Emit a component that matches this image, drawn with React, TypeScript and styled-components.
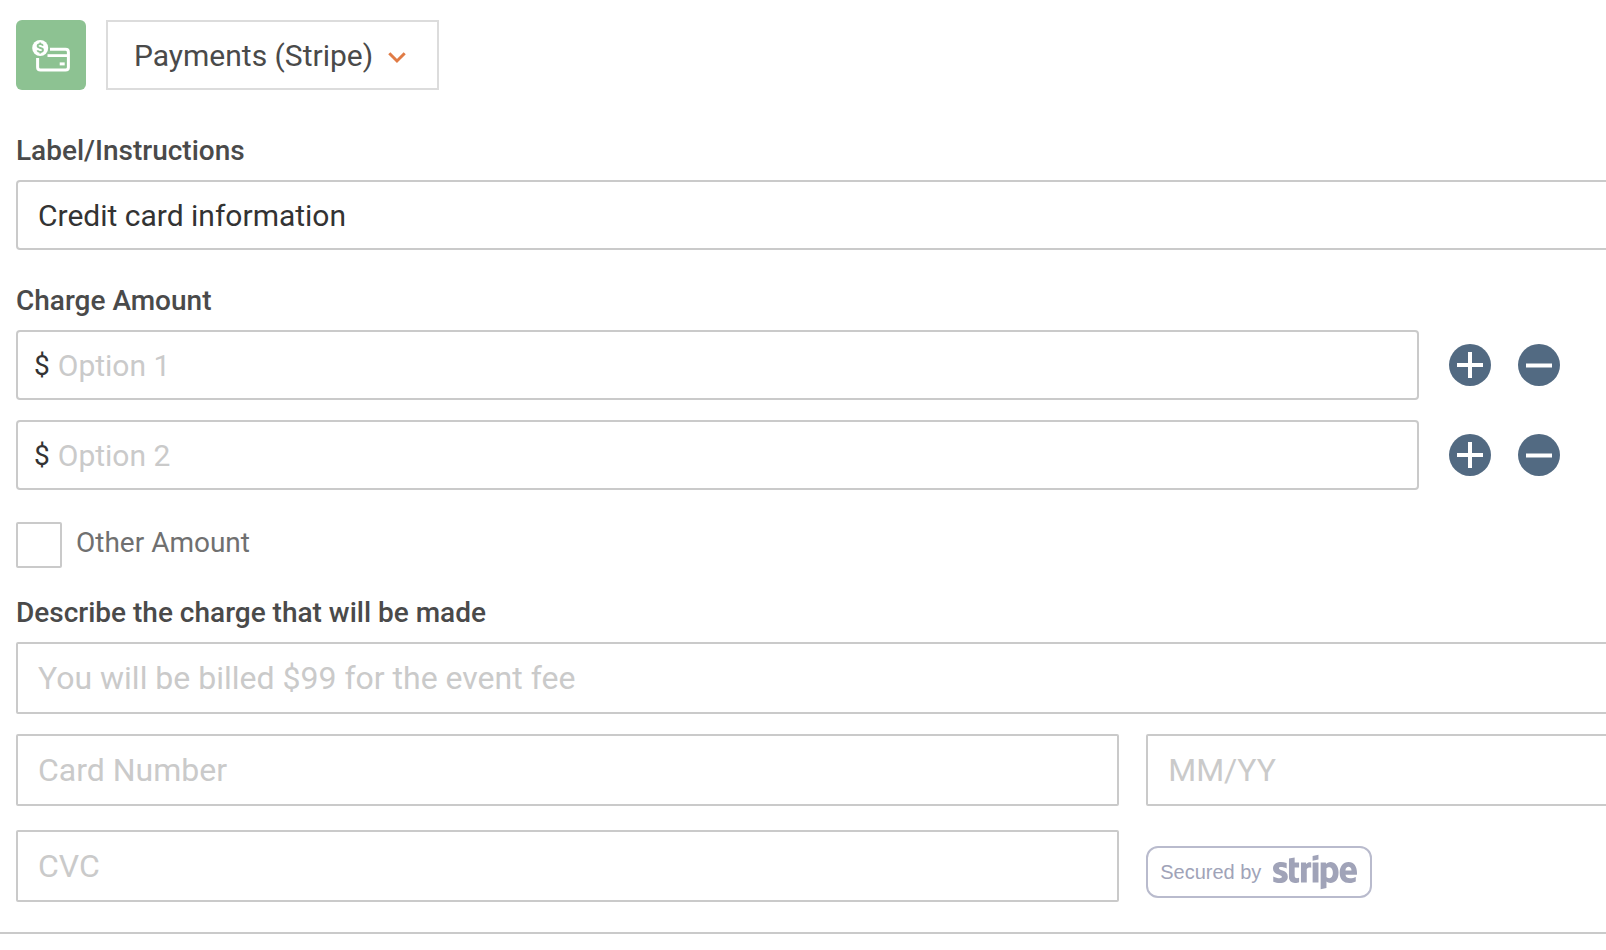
import React, { useState } from "react";
import styled, { createGlobalStyle } from "styled-components";
import { FaStripe } from "react-icons/fa";

const GlobalStyle = createGlobalStyle`
  *, *::before, *::after { box-sizing: border-box; }
  body {
    margin: 0;
    background: #fff;
    color: #4a4a4a;
    font-family: Roboto, "Liberation Sans", sans-serif;
    overflow-x: hidden;
  }
`;

const Page = styled.main`
  overflow: hidden;
  padding-top: 20px;
`;

/* The fields run past the right edge of the pane. */
const Form = styled.form`
  display: flex;
  flex-direction: column;
  margin: 0 -13px 30px 16px;
`;

const Header = styled.div`
  display: flex;
  gap: 20px;
  margin-bottom: 44px;
`;

const TypeBadge = styled.div`
  width: 70px;
  height: 70px;
  border-radius: 6px;
  background: #8dc292;
  svg { display: block; }
`;

const SelectWrap = styled.div`
  position: relative;
  svg {
    position: absolute;
    right: 33px;
    top: 31px;
    pointer-events: none;
  }
`;

const TypeSelect = styled.select`
  appearance: none;
  width: 333px;
  height: 70px;
  padding: 2px 60px 0 26px;
  border: 2px solid #dcdcdc;
  border-radius: 0;
  background: #fff;
  color: #4a4a4a;
  font: 400 30px/36px Roboto, "Liberation Sans", sans-serif;
`;

const Section = styled.section<{ $top?: number }>`
  display: flex;
  flex-direction: column;
  margin-top: ${(p) => p.$top ?? 0}px;
`;

const FieldLabel = styled.label`
  margin-bottom: 12px;
  color: #4a4a4a;
  font-size: 28px;
  font-weight: 500;
  line-height: 34px;
`;

const TextInput = styled.input<{ $large?: boolean }>`
  width: 100%;
  min-width: 0;
  height: ${(p) => (p.$large ? 72 : 70)}px;
  padding: 0 20px;
  border: 2px solid #cacaca;
  border-radius: ${(p) => (p.$large ? 2 : 4)}px;
  background: #fff;
  color: #333;
  font-family: inherit;
  font-size: ${(p) => (p.$large ? 32 : 30)}px;
  &::placeholder { color: #cacaca; opacity: 1; }
`;

const Options = styled.div`
  display: flex;
  flex-direction: column;
  gap: 20px;
`;

const OptionRow = styled.div`
  display: flex;
  align-items: center;
  gap: 27px;
  padding-right: 59px;
`;

const AmountBox = styled.div`
  display: flex;
  flex: 1;
  align-items: center;
  gap: 8px;
  height: 70px;
  margin-right: 3px;
  padding: 0 16px;
  border: 2px solid #cacaca;
  border-radius: 4px;
  color: #333;
  font-size: 28px;
`;

const AmountInput = styled.input`
  flex: 1;
  min-width: 0;
  height: 60px;
  padding: 0;
  border: 0;
  outline: 0;
  background: transparent;
  color: #333;
  font-family: inherit;
  font-size: 30px;
  &::placeholder { color: #cacaca; opacity: 1; }
`;

const RoundButton = styled.button`
  width: 42px;
  height: 42px;
  padding: 0;
  border: 0;
  border-radius: 50%;
  background: #526a82;
  cursor: pointer;
  svg { display: block; }
`;

const CheckRow = styled.div`
  display: flex;
  align-items: flex-start;
  gap: 14px;
  margin-top: 32px;
`;

const Checkbox = styled.input`
  appearance: none;
  width: 46px;
  height: 46px;
  margin: 0;
  border: 2px solid #cacaca;
  border-radius: 2px;
  background: #fff;
  &:checked { background: #526a82; box-shadow: inset 0 0 0 6px #fff; }
`;

const CheckLabel = styled.label`
  color: #707070;
  font-size: 28px;
  line-height: 42px;
`;

const CardGrid = styled.div`
  display: grid;
  grid-template-columns: 7fr 3fr;
  align-items: center;
  gap: 24px 27px;
  margin-top: 20px;
`;

const StripeBadge = styled.a`
  display: flex;
  align-items: center;
  justify-self: start;
  gap: 12px;
  width: 226px;
  height: 52px;
  margin-top: 12px;
  padding-left: 12px;
  border: 2px solid #b9bbcd;
  border-radius: 12px;
  color: #a0a3b8;
  font: 400 20px/24px "Liberation Sans", Arial, sans-serif;
  text-decoration: none;
  white-space: nowrap;
`;

const StripeMark = styled(FaStripe)`
  flex: none;
  width: 84px;
  height: 68px;
`;

const Divider = styled.hr`
  margin: 0;
  border: 0;
  border-top: 2px solid #cacaca;
`;

function PaymentIcon() {
  return (
    <svg width="70" height="70" viewBox="0 0 70 70" fill="none" aria-hidden="true">
      <circle cx="24.2" cy="28" r="8" fill="#fff" />
      <path
        d="M27 25.6c-.5-1-1.500-1.400-2.800-1.400-1.500 0-2.600.7-2.600 1.900 0 2.700 5.400 1.100 5.400 3.800 0 1.200-1.200 1.900-2.800 1.900-1.400 0-2.400-.5-2.900-1.500M24.200 22.600v1.600M24.200 31.800v1.600"
        stroke="#8dc292"
        strokeWidth="1.800"
      />
      <path d="M34 29.300h15.500q2.900 0 2.900 2.900v15q0 2.900-2.900 2.900h-25q-2.900 0-2.900-2.900V38" stroke="#fff" strokeWidth="3" />
      <path d="M31.500 35.600h20.500" stroke="#fff" strokeWidth="2.800" />
      <path d="M43.700 42.400h5v3h-5z" fill="#fff" />
    </svg>
  );
}

function SignIcon({ plus }: { plus?: boolean }) {
  return (
    <svg width="42" height="42" viewBox="0 0 42 42" fill="none" stroke="#fff" strokeWidth="4" aria-hidden="true">
      <path d={plus ? "M8 21h26M21 8v26" : "M8 21.500h26"} />
    </svg>
  );
}

export default function App() {
  const [options, setOptions] = useState([1, 2]);

  const addAfter = (index: number) =>
    setOptions((list) => [...list.slice(0, index + 1), Math.max(...list) + 1, ...list.slice(index + 1)]);
  const remove = (id: number) =>
    setOptions((list) => (list.length > 1 ? list.filter((o) => o !== id) : list));

  return (
    <Page>
      <GlobalStyle />
      <Form onSubmit={(e) => e.preventDefault()}>
        <Header>
          <TypeBadge>
            <PaymentIcon />
          </TypeBadge>
          <SelectWrap>
            <TypeSelect aria-label="Field type" defaultValue="stripe">
              <option value="stripe">Payments (Stripe)</option>
            </TypeSelect>
            <svg width="18" height="13" viewBox="0 0 18 13" fill="none" aria-hidden="true">
              <path d="M1.300 2.300 9 10l7.700-7.700" stroke="#e07b45" strokeWidth="3" />
            </svg>
          </SelectWrap>
        </Header>

        <Section>
          <FieldLabel htmlFor="instructions">Label/Instructions</FieldLabel>
          <TextInput id="instructions" defaultValue="Credit card information" />
        </Section>

        <Section $top={34}>
          <FieldLabel htmlFor={`option-${options[0]}`}>Charge Amount</FieldLabel>
          <Options>
            {options.map((id, index) => (
              <OptionRow key={id}>
                <AmountBox>
                  <span>$</span>
                  <AmountInput id={`option-${id}`} aria-label={`Option ${id}`} placeholder={`Option ${id}`} />
                </AmountBox>
                <RoundButton type="button" aria-label="Add option" onClick={() => addAfter(index)}>
                  <SignIcon plus />
                </RoundButton>
                <RoundButton type="button" aria-label="Remove option" onClick={() => remove(id)}>
                  <SignIcon />
                </RoundButton>
              </OptionRow>
            ))}
          </Options>
          <CheckRow>
            <Checkbox type="checkbox" id="other" />
            <CheckLabel htmlFor="other">Other Amount</CheckLabel>
          </CheckRow>
        </Section>

        <Section $top={28}>
          <FieldLabel htmlFor="describe">Describe the charge that will be made</FieldLabel>
          <TextInput $large id="describe" placeholder="You will be billed $99 for the event fee" />
          <CardGrid>
            <TextInput $large aria-label="Card Number" placeholder="Card Number" />
            <TextInput $large aria-label="Expiry date" placeholder="MM/YY" />
            <TextInput $large aria-label="CVC" placeholder="CVC" />
            <StripeBadge href="#stripe">
              Secured by
              <StripeMark role="img" aria-label="stripe" />
            </StripeBadge>
          </CardGrid>
        </Section>
      </Form>
      <Divider />
    </Page>
  );
}
